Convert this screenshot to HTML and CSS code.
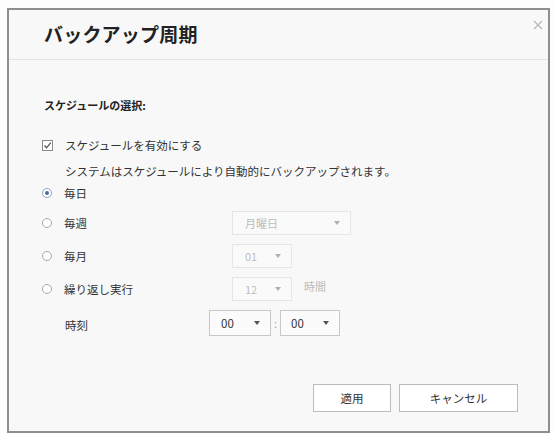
FILE: index.html
```html
<!DOCTYPE html>
<html lang="ja">
<head>
<meta charset="utf-8">
<link rel="stylesheet" href="styles.css">
</head>
<body>
<div class="dialog">
  <div class="header">
    <h1 class="title">バックアップ周期</h1>
    <svg class="close" width="10" height="10" viewBox="0 0 10 10"><path d="M1 1L9 9M9 1L1 9" stroke="#b8b8b8" stroke-width="1.2" fill="none"/></svg>
  </div>
  <div class="body">
    <div class="section-title">スケジュールの選択:</div>
    <div class="check-row">
      <svg class="checkbox" width="11" height="11" viewBox="0 0 11 11"><rect x="0.5" y="0.5" width="10" height="10" fill="#fff" stroke="#8a8a8a"/><path d="M2.5 5.5L4.6 7.8L8.8 2.6" stroke="#555" stroke-width="1.3" fill="none"/></svg>
      <span class="label">スケジュールを有効にする</span>
    </div>
    <div class="desc">システムはスケジュールにより自動的にバックアップされます。</div>
    <div class="options">
      <div class="row short">
        <div class="lcol"><span class="radio checked"></span><span class="label">毎日</span></div>
      </div>
      <div class="row">
        <div class="lcol"><span class="radio"></span><span class="label">毎週</span></div>
        <div class="select disabled w-wide"><span>月曜日</span><span class="arrow"></span></div>
      </div>
      <div class="row">
        <div class="lcol"><span class="radio"></span><span class="label">毎月</span></div>
        <div class="select disabled w-small"><span>01</span><span class="arrow"></span></div>
      </div>
      <div class="row">
        <div class="lcol"><span class="radio"></span><span class="label">繰り返し実行</span></div>
        <div class="select disabled w-small"><span>12</span><span class="arrow"></span></div>
        <span class="unit">時間</span>
      </div>
      <div class="row time">
        <div class="tcol"><span class="label">時刻</span></div>
        <div class="select active w-time1"><span>00</span><span class="arrow"></span></div>
        <span class="colon">:</span>
        <div class="select active w-time2"><span>00</span><span class="arrow"></span></div>
      </div>
    </div>
    <div class="footer">
      <button class="btn apply">適用</button>
      <button class="btn cancel">キャンセル</button>
    </div>
  </div>
</div>
</body>
</html>
```
FILE: styles.css
```css
* { box-sizing: border-box; }
html, body { margin: 0; padding: 0; background: #fdfdfd; }
body {
  font-family: "Noto Sans CJK JP", "Noto Sans", sans-serif;
  color: #333;
}
.dialog {
  margin: 8px 0 0 7px;
  width: 543px;
  height: 425px;
  border: 2px solid #8e8e8e;
  background: #f8f8f8;
  display: flex;
  flex-direction: column;
}
.header {
  height: 50px;
  border-bottom: 1px solid #e4e4e4;
  display: flex;
  justify-content: space-between;
  align-items: center;
  padding: 0 5px 0 35px;
}
.title {
  margin: 0;
  font-size: 19px;
  font-weight: bold;
  color: #222;
  line-height: 24px;
  margin-top: -2px;
  letter-spacing: 0.2px;
}
.close {
  align-self: flex-start;
  margin-top: 10px;
}
.body {
  flex: 1;
  display: flex;
  flex-direction: column;
  padding: 38px 30px 19px 33px;
}
.section-title {
  font-size: 11px;
  font-weight: bold;
  color: #222;
  line-height: 14px;
  padding-left: 2px;
}
.check-row {
  margin-top: 26px;
  display: flex;
  align-items: center;
  height: 14px;
  gap: 12px;
}
.checkbox { flex: none; }
.label {
  font-size: 11.5px;
  line-height: 14px;
  color: #333;
  white-space: nowrap;
}
.desc {
  margin-top: 12px;
  padding-left: 23px;
  font-size: 11.5px;
  line-height: 14px;
  color: #333;
  white-space: nowrap;
}
.options {
  margin-top: 6px;
  display: flex;
  flex-direction: column;
  gap: 9px;
}
.row {
  display: flex;
  align-items: center;
  height: 24px;
}
.row.short { height: 18px; }
.row.time { height: 26px; }
.lcol {
  width: 190px;
  display: flex;
  align-items: center;
  gap: 12px;
  flex: none;
}
.tcol {
  width: 167px;
  padding-left: 23px;
  flex: none;
}
.radio {
  width: 10px;
  height: 10px;
  border-radius: 50%;
  border: 1px solid #a8a8a8;
  background: #fff;
  flex: none;
  position: relative;
}
.radio.checked {
  border-color: #8ea2c4;
}
.radio.checked::after {
  content: "";
  position: absolute;
  left: 2px;
  top: 2px;
  width: 4px;
  height: 4px;
  border-radius: 50%;
  background: #4d6aa0;
}
.select {
  height: 24px;
  display: flex;
  align-items: center;
  justify-content: space-between;
  padding: 0 10px 0 12px;
  font-size: 11px;
  flex: none;
}
.select.disabled {
  border: 1px solid #e6e6e6;
  background: #fafafa;
  color: #bdbdbd;
}
.select.active {
  height: 26px;
  border: 1px solid #c8c8c8;
  background: #fbfbfb;
  color: #333;
  font-size: 11.5px;
}
.w-wide { width: 119px; }
.w-small { width: 60px; }
.w-time1 { width: 62px; padding-left: 11px; }
.w-time2 { width: 60px; padding-left: 10px; }
.arrow {
  width: 0;
  height: 0;
  border-left: 3.5px solid transparent;
  border-right: 3.5px solid transparent;
  border-top: 4px solid #b0b0b0;
}
.active .arrow { border-top-color: #555; }
.unit {
  font-size: 11px;
  color: #bbb;
  margin-left: 12px;
  align-self: flex-start;
  margin-top: 1px;
}
.colon {
  width: 9px;
  text-align: center;
  font-size: 11px;
  color: #aaa;
}
.footer {
  margin-top: auto;
  display: flex;
  justify-content: flex-end;
  gap: 8px;
}
.btn {
  height: 28px;
  background: #fff;
  border: 1px solid #bcbcbc;
  font-family: "Noto Sans CJK JP", "Noto Sans", sans-serif;
  font-size: 11.5px;
  color: #333;
  padding: 0;
}
.apply { width: 78px; }
.cancel { width: 119px; }
```
